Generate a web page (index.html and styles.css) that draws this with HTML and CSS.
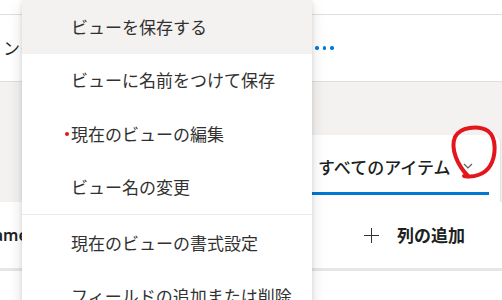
FILE: index.html
```html
<!DOCTYPE html>
<html>
<head>
  <title>ビューの保存</title>
  <link rel="stylesheet" href="styles.css">
</head>
<body>
  <div class="page">
    <div class="topbar"></div>

    <div class="commandbar">
      <span class="cmd-text">ンク</span>
      <span class="more">
        <i class="dot"></i><i class="dot"></i><i class="dot"></i>
      </span>
    </div>

    <div class="header">
      <div class="pivot-card">
        <div class="pivot-item">
          <span class="pivot-label">すべてのアイテム</span>
          <svg class="chevron" width="10" height="6" viewBox="0 0 10 6">
            <path d="M1 1 L5 5 L9 1" fill="none" stroke="#605e5c" stroke-width="1.2"/>
          </svg>
        </div>
      </div>
    </div>

    <div class="columns">
      <span class="col-name">Name</span>
      <span class="add-col">
        <svg width="15" height="15" viewBox="0 0 15 15">
          <path d="M7.5 0 V15 M0 7.5 H15" stroke="#323130" stroke-width="1"/>
        </svg>
        <span class="add-label">列の追加</span>
      </span>
    </div>
  </div>

  <ul class="menu">
    <li class="menu-item active">ビューを保存する</li>
    <li class="menu-item">ビューに名前をつけて保存</li>
    <li class="menu-item"><i class="unsaved"></i>現在のビューの編集</li>
    <li class="menu-item">ビュー名の変更</li>
    <li class="divider"></li>
    <li class="menu-item">現在のビューの書式設定</li>
    <li class="menu-item">フィールドの追加または削除</li>
  </ul>

  <svg class="annotation" width="60" height="60" viewBox="440 120 60 60">
    <path d="M468 176 C458 166 450 149 455 137 C460 127 478 125 488 131 C497 138 496 156 490 166 C485 174 474 178 464 176"
          fill="none" stroke="#e3161c" stroke-width="4" stroke-linecap="round"/>
  </svg>
</body>
</html>
```

FILE: styles.css
```css
body {
  margin: 0;
  font-family: "Noto Sans", "Noto Sans CJK JP", sans-serif;
  color: #323130;
  background-color: #fff;
  overflow: hidden;
}

.page {
  width: 502px;
}

.topbar {
  height: 14px;
  border-bottom: 1px solid #e1dfdd;
}

.commandbar {
  display: grid;
  grid-template-columns: 315px auto;
  align-items: center;
  height: 66px;
  border-bottom: 1px solid #e1dfdd;
}

.cmd-text {
  padding-left: 3px;
  font-family: "Noto Sans CJK JP", sans-serif;
  font-size: 17px;
  line-height: 24px;
  color: #201f1e;
}

.more {
  display: flex;
  gap: 4px;
}

.dot {
  width: 3.5px;
  height: 3.5px;
  border-radius: 50%;
  background-color: #0078d4;
}

.header {
  display: flex;
  justify-content: flex-end;
  align-items: flex-end;
  height: 120px;
  background-color: #f3f2f1;
}

.pivot-card {
  width: 188px;
  margin-right: 2px;
  padding: 20px 0 7px 22px;
  background-color: #fff;
  border-top-right-radius: 8px;
  box-shadow: 1px 0 1px rgba(0, 0, 0, 0.06);
}

.pivot-item {
  display: flex;
  align-items: center;
  width: 171px;
  padding: 0 0 13px 6px;
  border-bottom: 3px solid #0078d4;
}

.pivot-label {
  font-family: "Noto Sans CJK JP", sans-serif;
  font-size: 17px;
  line-height: 24px;
  font-weight: 500;
  color: #201f1e;
}

.chevron {
  margin-left: 13px;
  margin-top: -3px;
}

.columns {
  display: grid;
  grid-template-columns: 364px auto;
  align-items: center;
  height: 66px;
  border-bottom: 3px solid #e8e6e4;
}

.col-name {
  margin-left: -19px;
  font-size: 16px;
  font-weight: 600;
  color: #201f1e;
}

.add-col {
  display: flex;
  align-items: center;
  gap: 18px;
}

.add-label {
  font-family: "Noto Sans CJK JP", sans-serif;
  font-size: 17px;
  line-height: 24px;
  font-weight: 700;
  color: #201f1e;
}

.menu {
  position: absolute;
  top: 0;
  left: 22px;
  width: 290px;
  margin: 0;
  padding: 0;
  list-style: none;
  background-color: #fff;
  box-shadow: 0 6px 14px rgba(0, 0, 0, 0.13), 0 1px 4px rgba(0, 0, 0, 0.11);
}

.menu-item {
  display: flex;
  align-items: center;
  height: 53.5px;
  padding-left: 49px;
  font-family: "Noto Sans CJK JP", sans-serif;
  font-size: 17px;
  line-height: 24px;
  color: #323130;
  white-space: nowrap;
}

.menu-item.active {
  background-color: #f3f2f1;
}

.unsaved {
  width: 4px;
  height: 4px;
  margin-left: -6px;
  margin-right: 2px;
  border-radius: 50%;
  background-color: #e3161c;
}

.divider {
  height: 1px;
  margin-bottom: 1px;
  background-color: #edebe9;
}

.annotation {
  position: absolute;
  left: 440px;
  top: 120px;
}
```
